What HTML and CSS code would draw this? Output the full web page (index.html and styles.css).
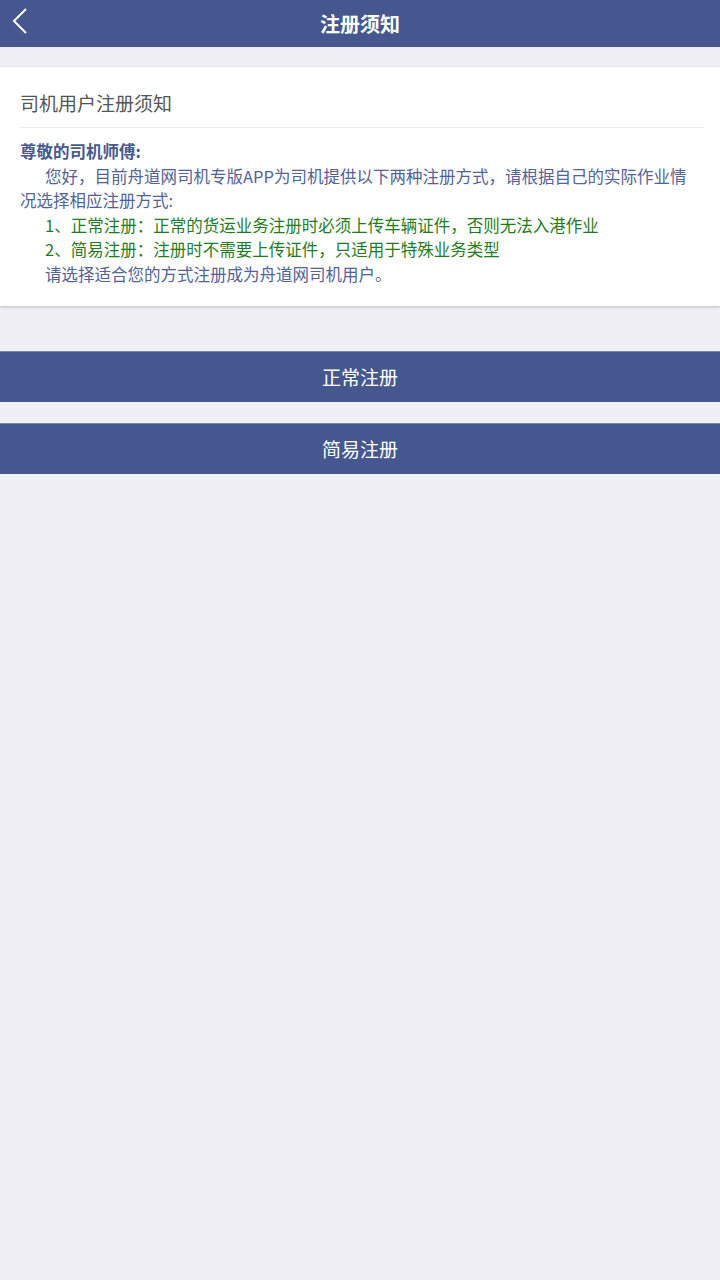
FILE: index.html
```html
<!DOCTYPE html>
<html>
<head>
<meta charset="utf-8">
<title>注册须知</title>
<link rel="stylesheet" href="styles.css">
</head>
<body>
<div class="header">
	<a href="javascript:void(0);" class="back">
		<svg width="16" height="26" viewBox="0 0 16 26"><polyline points="14,1 2,13 14,25" fill="none" stroke="#fff" stroke-width="2"/></svg>
	</a>
	<div class="title">注册须知</div>
</div>
<div class="card">
	<div class="card-title">司机用户注册须知</div>
	<div class="notice">
		<p class="bold">尊敬的司机师傅:</p>
		<p class="indent">您好，目前舟道网司机专版APP为司机提供以下两种注册方式，请根据自己的实际作业情况选择相应注册方式:</p>
		<p class="item green">1、正常注册：正常的货运业务注册时必须上传车辆证件，否则无法入港作业</p>
		<p class="item green">2、简易注册：注册时不需要上传证件，只适用于特殊业务类型</p>
		<p class="item">请选择适合您的方式注册成为舟道网司机用户。</p>
	</div>
</div>
<div class="buttons">
	<a href="javascript:void(0);" class="btn">正常注册</a>
	<a href="javascript:void(0);" class="btn">简易注册</a>
</div>
</body>
</html>
```

FILE: styles.css
```css
* {
	font-family: "Noto Sans CJK SC", "Noto Sans", sans-serif;
	box-sizing: border-box;
}
html, body {
	margin: 0;
	padding: 0;
	background-color: #efeff5;
	min-height: 100%;
}
.header {
	height: 47px;
	background-color: #465790;
	position: relative;
	display: flex;
	align-items: center;
	justify-content: center;
}
.back {
	position: absolute;
	left: 12px;
	top: 8px;
	display: block;
	line-height: 0;
}
.title {
	color: #fff;
	font-size: 20px;
	font-weight: bold;
}
.card {
	margin-top: 20px;
	background-color: #fff;
	padding: 0 16px 19px 20px;
	box-shadow: 0 1px 3px rgba(0,0,0,0.22);
}
.card-title {
	padding: 23px 0 11px 0;
	line-height: 26px;
	font-size: 19px;
	color: #555;
	border-bottom: 1px solid #eeeef0;
}
.notice {
	padding: 11px 9px 0 0;
	font-size: 16.5px;
	line-height: 24.6px;
	color: #53629a;
}
.notice p {
	margin: 0;
}
.bold {
	font-weight: bold;
	color: #485890;
}
.indent {
	text-indent: 25px;
}
.item {
	padding-left: 25px;
}
.green {
	color: #1f7d1f;
}
.buttons {
	margin-top: 45px;
	display: flex;
	flex-direction: column;
	gap: 21px;
}
.btn {
	display: block;
	height: 51px;
	line-height: 50px;
	background-color: #465790;
	color: #fff;
	text-align: center;
	font-size: 19px;
	text-decoration: none;
	border-top: 1px solid #7c87ad;
}
```
